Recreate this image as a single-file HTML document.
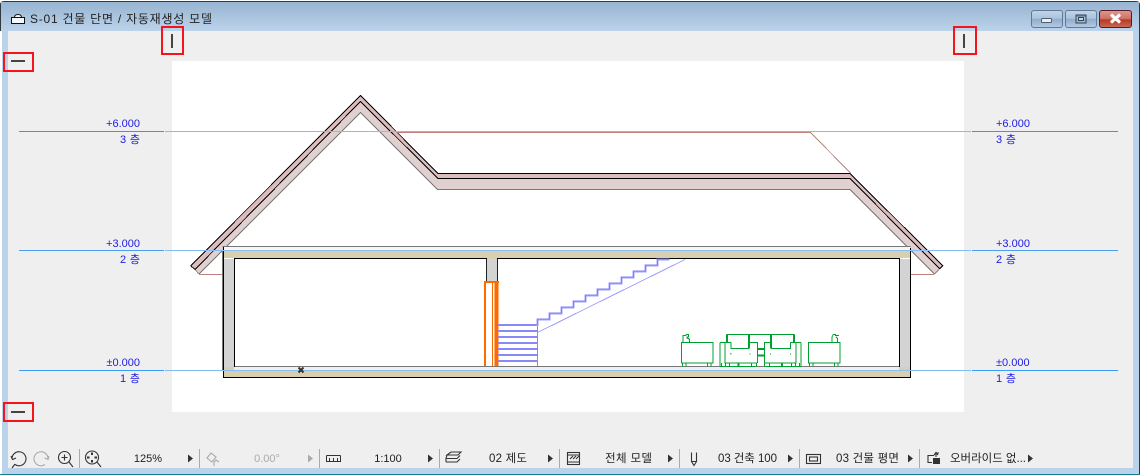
<!DOCTYPE html>
<html><head><meta charset="utf-8">
<style>
html,body{margin:0;padding:0;background:#fff;width:1141px;height:476px;overflow:hidden}
svg{display:block}
text{font-family:"Liberation Sans","Noto Sans CJK KR",sans-serif}
.lv{font-size:11px;fill:#1c1ce6}
.lk{font-size:11px;fill:#1c1ce6}
.sb{font-size:11px;fill:#222;text-anchor:middle}
.sk{font-size:11.500px;fill:#222}
</style></head><body>
<svg width="1141" height="476" viewBox="0 0 1141 476" xmlns="http://www.w3.org/2000/svg">
<defs>
<linearGradient id="tb" x1="0" y1="0" x2="0" y2="1"><stop offset="0" stop-color="#97b4d1"/><stop offset="1" stop-color="#bcd3ea"/></linearGradient>
<linearGradient id="bn" x1="0" y1="0" x2="0" y2="1"><stop offset="0" stop-color="#c3d5e8"/><stop offset=".48" stop-color="#a9c2dc"/><stop offset=".5" stop-color="#8facca"/><stop offset="1" stop-color="#b5cce4"/></linearGradient>
<linearGradient id="cl" x1="0" y1="0" x2="0" y2="1"><stop offset="0" stop-color="#dc9a8f"/><stop offset=".48" stop-color="#cf7163"/><stop offset=".55" stop-color="#b83a26"/><stop offset="1" stop-color="#c76a55"/></linearGradient>
</defs>
<!-- frame -->
<path d="M0.500 31V5Q0.500 1.500 4 1.500H1136Q1139.500 1.500 1139.500 5V474.500" fill="#bad2ea" stroke="#2f3a3f"/>
<rect x="2" y="31" width="1137" height="443" fill="#bad2ea"/>
<rect x="1" y="2" width="1138" height="29" fill="url(#tb)"/>
<rect x="0" y="474" width="1140" height="1" fill="#0e7f8f"/>
<rect x="8" y="31" width="1125" height="437" fill="#efefef"/>
<!-- title -->
<path d="M11.500 17.500h13v6h-13zM14.500 17.500q0-3 3.500-3q3.500 0 3.500 3" fill="#f5f8fb" stroke="#111" stroke-width="1"/>
<text x="30" y="23" font-size="12" fill="#222" textLength="182" lengthAdjust="spacing">S-01 건물 단면 / 자동재생성 모델</text>
<!-- caption buttons -->
<rect x="1031.500" y="10.500" width="31" height="17" rx="2.500" fill="url(#bn)" stroke="#5f7a98"/>
<rect x="1041.500" y="18.500" width="10" height="4" rx="1" fill="#e8eef4" stroke="#4e5f70"/>
<rect x="1065.500" y="10.500" width="31" height="17" rx="2.500" fill="url(#bn)" stroke="#5f7a98"/>
<rect x="1076" y="15" width="10" height="8" fill="none" stroke="#33465a" stroke-width="1"/>
<rect x="1076" y="15" width="10" height="2" fill="#33465a" opacity=".4"/>
<rect x="1078.500" y="17.500" width="5" height="3" fill="#c8d6e4" stroke="#33465a"/>
<rect x="1099.500" y="10.500" width="32" height="17" rx="2.500" fill="url(#cl)" stroke="#5c1a28"/>
<path d="M1111 14.500l9 8M1120 14.500l-9 8" stroke="#f2f2f2" stroke-width="3.200" fill="none"/>
<path d="M1111 14.500l9 8M1120 14.500l-9 8" stroke="#fff" stroke-width="2" fill="none"/>

<!-- paper -->
<rect x="172" y="61" width="792" height="351" fill="#fff"/>

<!-- roof -->
<path d="M360.500 95.500L438 173.300H850L942.700 265.700L934.300 274L850 189.300H437.500L360.500 112.700L199 274L190.700 265.700Z" fill="#e1d0d0"/>
<path d="M360.500 95.500L438 173.300H850L942.700 265.700L939.300 268.800L850 178.800H438L360.500 101.500L195 269L190.700 265.700Z" fill="#dcbcbc"/>
<g shape-rendering="crispEdges" fill="none" stroke-width="1">
<path d="M934.300 274L850 189.500H437.500L360.500 112.700L199 274" stroke="#777"/>
<path d="M190.700 265.700L360.500 95.500L438 173.500H850L942.700 265.700L939.300 269" stroke="#000"/>
<path d="M190.700 265.700L195 269.500L360.500 101.500L438 178.500H850L939.300 268.500" stroke="#000"/>
<path d="M199 274L195 269.500M934.300 274L939.300 269" stroke="#888"/>
<path d="M397 132.500H810M199 274.500H222M911 274.500H934" stroke="#c08080"/>
<path d="M810 132L851 173.500" stroke="#b08a80"/>
</g>

<!-- walls and slabs -->
<rect x="223" y="247" width="687" height="4" fill="#f7f7f0"/>
<rect x="224" y="250" width="686" height="8" fill="#d9cfae"/>
<rect x="223" y="259" width="11" height="108" fill="#d3d3d3"/>
<rect x="899" y="259" width="11" height="108" fill="#d3d3d3"/>
<rect x="223" y="367" width="687" height="10" fill="#d9cfae"/>
<rect x="234" y="367" width="665" height="3" fill="#f0f0ea"/>
<rect x="487" y="259" width="10" height="23" fill="#d3d3d3"/>
<path d="M222.500 246.500H910.500M234.500 366.500H899.500" fill="none" stroke="#777" stroke-width="1"/>
<path d="M223.500 247V377.500H910.500V248M234.500 367V258.500H899.500V367" fill="none" stroke="#000" stroke-width="1"/>
<path d="M486.500 259V282.500H497.500V259" fill="none" stroke="#222" stroke-width="1"/>
<rect x="487" y="258" width="10" height="1" fill="#d9cfae"/>
<rect x="222" y="251" width="1" height="119" fill="#777"/>

<!-- door -->
<rect x="484" y="281" width="15" height="2" fill="#ff6a00"/>
<rect x="484" y="282" width="2" height="84" fill="#ff6a00"/>
<rect x="495" y="282" width="3.500" height="84" fill="#ff6a00"/>
<rect x="492" y="283" width="1" height="83" fill="#ff6a00"/>
<rect x="494" y="283" width="1" height="83" fill="#ffb070"/>

<!-- stairs -->
<g fill="#8888fb">
<rect x="498" y="324" width="40" height="2"/><rect x="498" y="330" width="40" height="2"/><rect x="498" y="336" width="40" height="2"/><rect x="498" y="342" width="40" height="2"/><rect x="498" y="348" width="40" height="2"/><rect x="498" y="354" width="40" height="2"/><rect x="498" y="360" width="40" height="2"/>
<rect x="537" y="325" width="1" height="41"/>
</g>
<path d="M537.500 326V319.500H549.500V313.500H561.500V307.500H573.500V301.500H585.500V295.500H597.500V289.500H609.500V283.500H621.500V277.500H633.500V271.500H645.500V265.500H657.500V259.500H669.500" fill="none" stroke="#a0a0ff" stroke-width="2" shape-rendering="crispEdges"/>
<path d="M537.500 325V319H549.500V313H561.500V307H573.500V301H585.500V295H597.500V289H609.500V283H621.500V277H633.500V271H645.500V265H657.500V259H669.500" fill="none" stroke="#7f7ff5" stroke-width="1" shape-rendering="crispEdges"/>
<path d="M537.500 332.500L685 259.500" fill="none" stroke="#a0a0ff" stroke-width="1" shape-rendering="crispEdges"/>

<!-- furniture -->
<g transform="translate(670 325) scale(.33333)" fill="none" stroke="#00a030" stroke-width="3" shape-rendering="crispEdges">
<path d="M34 52H129V114H34ZM37 114V124M48 114V124M112 114V124M123 114V124M39 52V32H46L49 28H56V36H50M50 38L58 42V52"/>
<path d="M415 52H510V114H415ZM418 114V124M429 114V124M493 114V124M504 114V124M486 52V36L490 28H497V32H507M498 36L502 40V52"/>
<path d="M170 28H373M183 52V70H237M303 70H362V52M240 52H262V114M303 52H283V114"/>
<path d="M150 52H178V52M178 52H183M150 52V124H255M165 52V114H260V124M154 114V124M167 114V124M178 114V124M245 114V124"/>
<path d="M393 52H362M393 52V124H288M378 52V114H283V124M389 114V124M376 114V124M365 114V124M298 114V124"/>
<path d="M181 85l3 3M240 85v3M302 85v3M362 85v3"/>
<path d="M262 72H283M262 92H283" stroke-width="6"/>
<path d="M171 28V52M237 28V70M303 28V70M372 28V52M205 114V124M336 114V124" stroke-width="6"/>
</g>

<!-- level lines -->
<g fill="none" stroke-width="1">
<path d="M165 131.500H971M165 250.500H971M165 370.500H971" stroke="#85bdf5"/>
<path d="M19 131.500H164M972 131.500H1118" stroke="#4a90e2"/>
<path d="M19 250.500H164M972 250.500H1118" stroke="#4a9ff0"/>
<path d="M19 370.500H164M972 370.500H1118" stroke="#3c9cf5"/>
</g>
<path d="M298.500 367.500l5 5M303.500 367.500l-5 5" stroke="#333" stroke-width="2"/>

<!-- level labels -->
<text class="lv" x="140" y="127" text-anchor="end">+6.000</text>
<text class="lk" x="120" y="143" textLength="20" lengthAdjust="spacing">3 층</text>
<text class="lv" x="140" y="247" text-anchor="end">+3.000</text>
<text class="lk" x="120" y="263" textLength="20" lengthAdjust="spacing">2 층</text>
<text class="lv" x="140" y="366" text-anchor="end">±0.000</text>
<text class="lk" x="120" y="382" textLength="20" lengthAdjust="spacing">1 층</text>
<text class="lv" x="996" y="127">+6.000</text>
<text class="lk" x="996" y="143" textLength="20" lengthAdjust="spacing">3 층</text>
<text class="lv" x="996" y="247">+3.000</text>
<text class="lk" x="996" y="263" textLength="20" lengthAdjust="spacing">2 층</text>
<text class="lv" x="996" y="366">±0.000</text>
<text class="lk" x="996" y="382" textLength="20" lengthAdjust="spacing">1 층</text>

<!-- red markers -->
<g fill="none" stroke="#f5141c" stroke-width="2">
<rect x="162" y="27" width="21" height="27"/>
<rect x="954" y="27" width="22" height="27"/>
<rect x="4" y="53" width="29" height="18"/>
<rect x="4" y="403" width="29" height="18"/>
</g>
<g fill="#444">
<rect x="171" y="34" width="2" height="14"/>
<rect x="963" y="34" width="2" height="14"/>
<rect x="11" y="60" width="14" height="2"/>
<rect x="11" y="411" width="14" height="2"/>
</g>

<!-- status bar -->
<g fill="#aaa">
<rect x="79" y="449" width="1" height="19"/><rect x="199" y="449" width="1" height="19"/><rect x="319" y="449" width="1" height="19"/><rect x="439" y="449" width="1" height="19"/><rect x="559" y="449" width="1" height="19"/><rect x="679" y="449" width="1" height="19"/><rect x="799" y="449" width="1" height="19"/><rect x="919" y="449" width="1" height="19"/>
</g>
<g fill="#333">
<path d="M188 454.500l5 4-5 4zM428 454.500l5 4-5 4zM548 454.500l5 4-5 4zM668 454.500l5 4-5 4zM788 454.500l5 4-5 4zM908 454.500l5 4-5 4zM1028 454.500l5 4-5 4z"/>
</g>
<path d="M308 454.500l5 4-5 4z" fill="#aaa"/>
<g fill="none" stroke="#333" stroke-width="1.100">
<!-- undo -->
<path d="M12 459a7 7 0 1 1 3 5.500M11 456l1.500 3.500 3.500-1.500M15 464l-3 4"/>
<!-- zoom in -->
<circle cx="64.500" cy="457.500" r="6"/><path d="M69 462l4 5M61.500 457.500h6M64.500 454.500v6"/>
<!-- fit -->
<circle cx="92" cy="457.500" r="6.500"/><path d="M97 462l4 5"/>
<path d="M92 452.500v2.500M92 460v2.500M87 457.500h2.500M94.500 457.500h2.500" stroke-width="2"/>
<!-- scale ruler -->
<path d="M326.500 455.500v6h14v-6M329.500 458v3M333.500 458v3M337.500 458v3M326.500 455.500h14" stroke-width="1"/>
<!-- layers -->
<path d="M447 455l4-3h10l-3 3zM446 458.500h11l3-3M446 462h11l3-3M447 455l-1 3.500v3.500"/>
<!-- pen -->
<path d="M691.500 452.500v9l2.500 4 2.500-4v-9M691.500 461.500h5"/>
<!-- stories -->
<rect x="806.500" y="454.500" width="14" height="9"/><rect x="809.500" y="457" width="8" height="4"/>
<!-- model view -->
<rect x="567.500" y="452.500" width="12" height="12"/><path d="M567.500 455h12M567.500 462h12M570 459l3-3M573 459l3-3M576 459l3-3"/>
<!-- override -->
<path d="M934 455.500h-6v7h4M936 457v-4M934 455l2-2.500 2 2.500M936 453h3"/>
</g>
<rect x="933" y="458" width="7" height="6" fill="#333"/>
<g fill="none" stroke="#aaa" stroke-width="1.100">
<path d="M48 459a7 7 0 1 0-3 5.500M49 456l-1 3.500-3.500-1.500"/>
<path d="M207 458l4-5 5 4-4 5zM214 466v-4l2-2 3 2"/>
</g>
<text class="sb" x="148" y="462">125%</text>
<text class="sb" x="267" y="462" style="fill:#aaa">0.00°</text>
<text class="sb" x="388" y="462">1:100</text>
<text class="sk" x="489" y="462" textLength="38" lengthAdjust="spacing">02 제도</text>
<text class="sk" x="605" y="462" textLength="47" lengthAdjust="spacing">전체 모델</text>
<text class="sk" x="718" y="462" textLength="59" lengthAdjust="spacing">03 건축 100</text>
<text class="sk" x="836" y="462" textLength="63" lengthAdjust="spacing">03 건물 평면</text>
<text class="sk" x="950" y="462" textLength="76" lengthAdjust="spacing">오버라이드 없...</text>
</svg>
</body></html>
